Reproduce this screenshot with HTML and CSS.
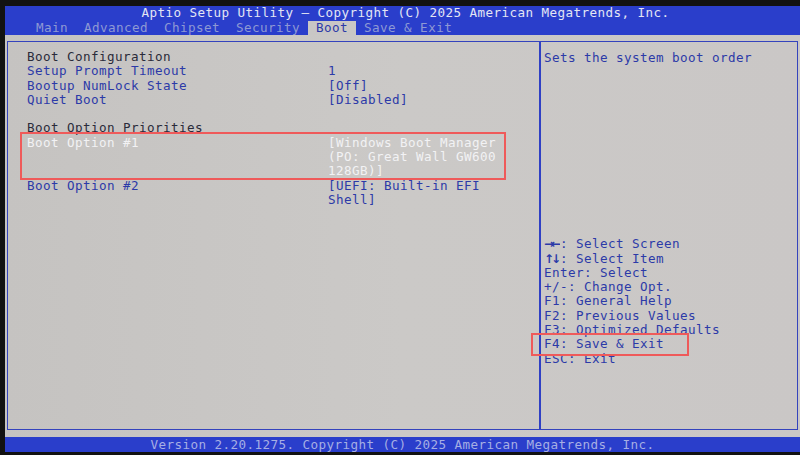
FILE: index.html
```html
<!DOCTYPE html>
<html>
	<head>
		<meta charset="UTF-8">
		<title>Aptio Setup Utility</title>
		<link rel="stylesheet" href="styles.css">
	</head>
	<body>
		<div class="screen">
			<div class="top">
				<div class="title">Aptio Setup Utility – Copyright (C) 2025 American Megatrends, Inc.</div>
				<div class="tabs">
					<span class="tab">Main</span>
					<span class="tab">Advanced</span>
					<span class="tab">Chipset</span>
					<span class="tab">Security</span>
					<span class="tab on">Boot</span>
					<span class="tab">Save &amp; Exit</span>
				</div>
			</div>
			<div class="main">
				<div class="frame">
					<div class="left">
						<div class="row"><span class="head">Boot Configuration</span></div>
						<div class="row"><span>Setup Prompt Timeout</span><span class="val">1</span></div>
						<div class="row"><span>Bootup NumLock State</span><span class="val">[Off]</span></div>
						<div class="row"><span>Quiet Boot</span><span class="val">[Disabled]</span></div>
						<div class="row blank"></div>
						<div class="row"><span class="head">Boot Option Priorities</span></div>
						<div class="row sel"><span>Boot Option #1</span><span class="val">[Windows Boot Manager (PO: Great Wall GW600 128GB)]</span></div>
						<div class="row"><span>Boot Option #2</span><span class="val">[UEFI: Built-in EFI Shell]</span></div>
					</div>
					<div class="help">
						<div class="desc">Sets the system boot order</div>
						<div class="keys">
							<div><b>→←</b>: Select Screen</div>
							<div><b>↑↓</b>: Select Item</div>
							<div>Enter: Select</div>
							<div>+/-: Change Opt.</div>
							<div>F1: General Help</div>
							<div>F2: Previous Values</div>
							<div>F3: Optimized Defaults</div>
							<div>F4: Save &amp; Exit</div>
							<div>ESC: Exit</div>
						</div>
					</div>
				</div>
			</div>
			<div class="foot">Version 2.20.1275. Copyright (C) 2025 American Megatrends, Inc.</div>
			<div class="mark mark_opt"></div>
			<div class="mark mark_f4"></div>
		</div>
	</body>
</html>
```

FILE: styles.css
```css
*{
	padding: 0;
	margin: 0;
	box-sizing: border-box;
}
body{
	background: #121212;
	font-family: "DejaVu Sans Mono", "Liberation Mono", monospace;
	font-size: 12.6px;
	letter-spacing: 0.42px;
}
.screen{
	position: relative;
	width: 800px;
	height: 455px;
	padding: 6px 0 3px 5px;
	display: flex;
	flex-direction: column;
}
.top{
	height: 29px;
	background: #2a3ecb;
}
.title{
	height: 14px;
	line-height: 14px;
	text-align: center;
	padding-left: 6px;
	color: #e4e6f4;
	white-space: pre;
}
.tabs{
	display: flex;
	padding-left: 23px;
	margin-top: 1px;
}
.tab{
	padding: 0 8px;
	line-height: 14px;
	height: 14px;
	color: #8e99d4;
	white-space: pre;
}
.tab.on{
	background: #c9c7c5;
	color: #2c3aa8;
}
.main{
	flex: 1;
	background: linear-gradient(90deg, #c5c3c1 0%, #cbc9c7 50%, #cac7c6 100%);
	padding: 6px 2px 7px 2px;
}
.frame{
	height: 100%;
	border: 1px solid #3443bd;
	display: flex;
}
.left{
	width: 533px;
	border-right: 2px solid #2f40c4;
	padding: 8px 0 0 19px;
	color: #2c3aa8;
}
.row{
	display: grid;
	grid-template-columns: 301px 178px;
	line-height: 14.3px;
}
.row.blank{
	height: 14.3px;
}
.head{
	color: #2a2b3a;
}
.row.sel{
	color: #f2f2f4;
}
.help{
	flex: 1;
	padding: 9px 0 0 3px;
	color: #2c3aa8;
	line-height: 14.3px;
}
.keys{
	margin-top: 172px;
}
.keys b{
	font-family: "DejaVu Sans", sans-serif;
	font-weight: bold;
	letter-spacing: -3px;
	font-size: 12px;
	display: inline-block;
	width: 16px;
	overflow: hidden;
	vertical-align: top;
}
.foot{
	height: 15px;
	line-height: 15px;
	background: #2a3ecb;
	color: #a6afe4;
	text-align: center;
	white-space: pre;
}
.mark{
	position: absolute;
	border: 2px solid #ef5a5a;
}
.mark_opt{
	left: 20px;
	top: 132px;
	width: 486px;
	height: 48px;
}
.mark_f4{
	left: 531px;
	top: 333px;
	width: 158px;
	height: 23px;
}
```
